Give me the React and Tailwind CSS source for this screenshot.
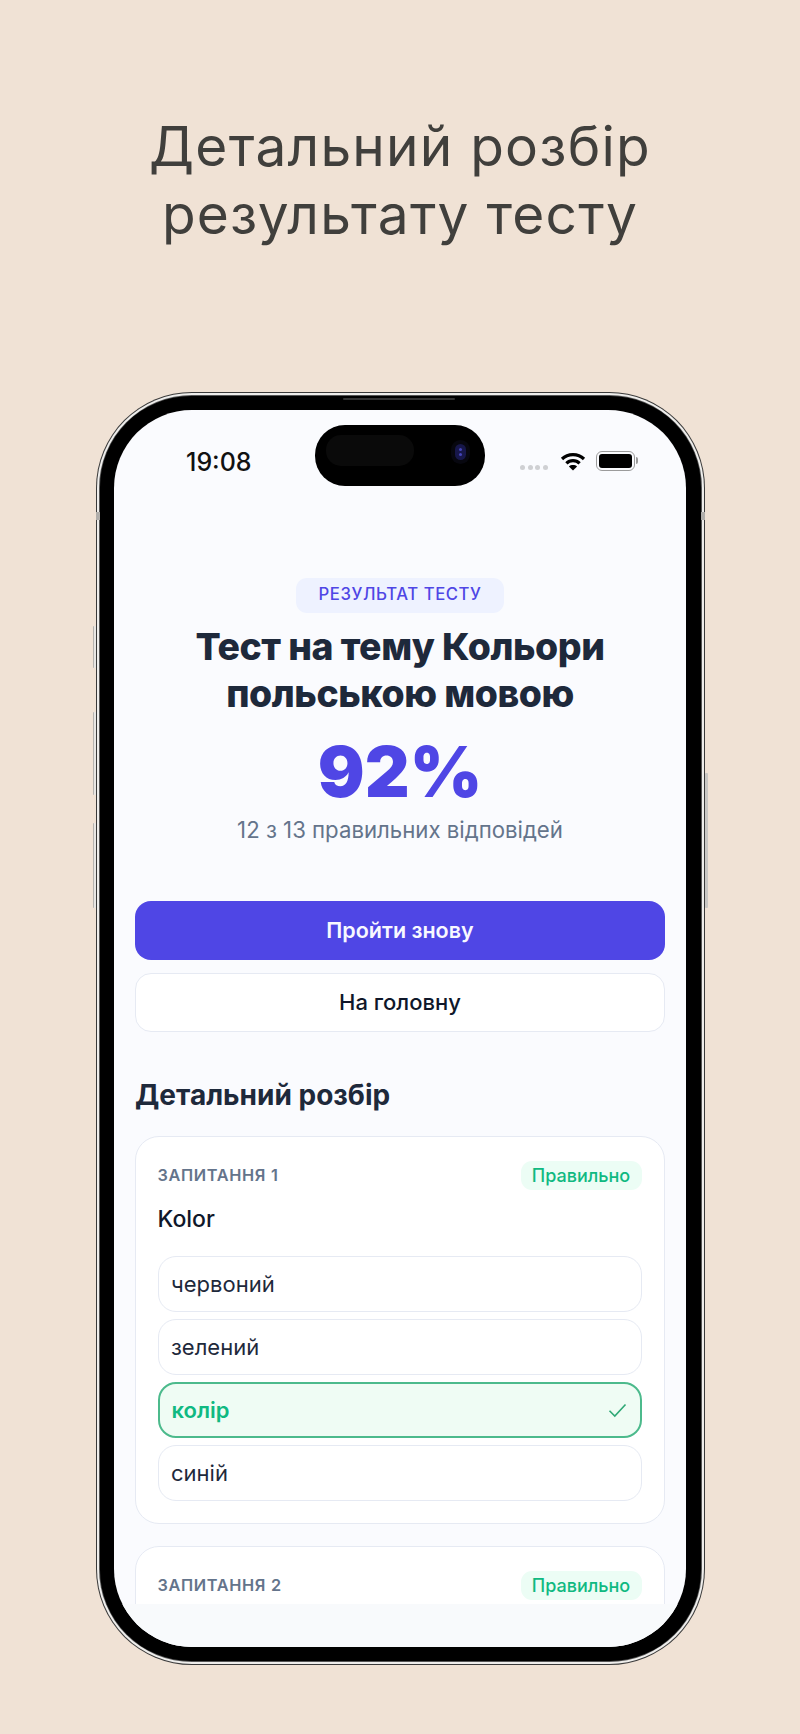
import React from "react";

function Wifi() {
  return (
    <svg width="26" height="19" viewBox="0 0 26 19" fill="none">
      <path d="M2 7 C8 1.2 18 1.2 24 7" stroke="#000" strokeWidth="3.2" />
      <path d="M6.4 11.4 C10 7.8 16 7.8 19.6 11.4" stroke="#000" strokeWidth="3.2" />
      <path d="M13 18.5 L8.9 14.4 C11 12.6 15 12.6 17.1 14.4 Z" fill="#000" />
    </svg>
  );
}

function Check() {
  return (
    <svg width="19" height="15" viewBox="0 0 19 15" fill="none">
      <path d="M1.5 7.8 L6.8 13 L17.5 1.5" stroke="#2fa876" strokeWidth="1.6" />
    </svg>
  );
}

function Option({ text, correct }) {
  return (
    <div
      className={
        correct
          ? "h-[56px] flex items-center justify-between pl-[12px] pr-[13px] rounded-[18px] border-2 border-[#4cba8c] bg-[#effcf4]"
          : "h-[56px] flex items-center justify-between pl-[12.5px] pr-[13px] rounded-[18px] border-[1.5px] border-[#e6eaf3] bg-white"
      }
    >
      <span className={correct ? "text-[22px] font-semibold text-[#10b981]" : "text-[22px] text-[#1e293b]"}>{text}</span>
      {correct && <Check />}
    </div>
  );
}

function QuestionHead({ n }) {
  return (
    <div className="flex items-center justify-between h-[29px]">
      <span className="text-[16.3px] font-semibold tracking-[0.04em] text-[#64748b]">ЗАПИТАННЯ {n}</span>
      <span className="h-[29px] w-[121px] flex items-center justify-center rounded-[11px] bg-[#ecfdf5] text-[18px] font-medium text-[#10b981]">
        Правильно
      </span>
    </div>
  );
}

function SideButton({ cls }) {
  return <div className={"absolute w-[3px] rounded-[1px] bg-[#e8e6e3] border-l border-[#b5b3b0] " + cls} />;
}

export default function App() {
  return (
    <div
      className="w-[800px] h-[1734px] overflow-hidden bg-[#f0e2d5] flex flex-col items-center"
      style={{ fontFamily: "Inter, 'Noto Sans', sans-serif" }}
    >
      <h1 className="mt-[113px] h-[135px] text-center text-[55px] leading-[67.5px] tracking-[0.022em] text-[#403f3c] font-normal">
        Детальний розбір
        <br />
        результату тесту
      </h1>

      <div className="relative mt-[144px] w-[609px] h-[1273px] rounded-[96px] bg-[#3a3a3a] p-[1px]">
        <SideButton cls="-left-[3px] top-[234px] h-[42px]" />
        <SideButton cls="-left-[3px] top-[320px] h-[83px]" />
        <SideButton cls="-left-[3px] top-[431px] h-[85px]" />
        <div className="absolute -right-[3px] top-[381px] h-[135px] w-[3px] rounded-[1px] bg-[#c9c7c4]" />
        <div className="absolute left-0 top-[120px] w-[4px] h-[8px] bg-[#b0aeab]" />
        <div className="absolute right-0 top-[120px] w-[4px] h-[8px] bg-[#b0aeab]" />

        <div className="w-full h-full rounded-[95px] bg-[#efeeec] p-[2px]">
          <div className="w-full h-full rounded-[93px] bg-[#555] p-[1px]">
            <div className="relative w-full h-full rounded-[91px] bg-black px-[14.5px] pt-[13.5px] pb-[14px]">
              <div className="absolute left-[243px] top-[2px] w-[112px] h-[2px] rounded-full bg-[#333]" />

              <div className="relative w-full h-full rounded-[78px] overflow-hidden bg-[#fafbfe] flex flex-col">
                <div className="absolute left-[201px] top-[15px] w-[170px] h-[61px] rounded-[30px] bg-black">
                  <div className="absolute left-[11px] top-[10px] w-[88px] h-[31px] rounded-[15px] bg-[#0a0a0a]" />
                  <div className="absolute left-[136px] top-[15px] w-[19px] h-[24px] rounded-full bg-[#07070f] flex items-center justify-center">
                    <div className="w-[11px] h-[16px] rounded-full bg-[#17174a] flex flex-col items-center justify-center gap-[2px]">
                      <i className="block w-[3px] h-[3px] rounded-full bg-[#4444b8]" />
                      <i className="block w-[3px] h-[3px] rounded-full bg-[#4444b8]" />
                    </div>
                  </div>
                </div>

                <div className="h-[1194px] overflow-hidden shrink-0 px-[21px]">
                  <div className="relative h-[168px] -mx-[21px]">
                    <span className="absolute left-[72px] top-[37px] text-[25px] leading-[30px] font-medium text-[#111]">19:08</span>
                    <div className="absolute left-[406px] top-[55px] flex gap-[2.5px]">
                      <i className="block w-[5px] h-[5px] rounded-full bg-[#cfd0d3]" />
                      <i className="block w-[5px] h-[5px] rounded-full bg-[#cfd0d3]" />
                      <i className="block w-[5px] h-[5px] rounded-full bg-[#cfd0d3]" />
                      <i className="block w-[5px] h-[5px] rounded-full bg-[#cfd0d3]" />
                    </div>
                    <div className="absolute left-[446px] top-[42px]"><Wifi /></div>
                    <div className="absolute left-[482px] top-[41px] w-[39px] h-[20px] rounded-[6px] border-[1.5px] border-[#9b9b9b] p-[2px]">
                      <div className="w-full h-full rounded-[3px] bg-black" />
                    </div>
                    <div className="absolute left-[522px] top-[47px] w-[2px] h-[7px] rounded-r-[2px] bg-[#9b9b9b]" />
                  </div>

                  <div className="flex flex-col items-center">
                    <div className="w-[208px] h-[35px] flex items-center justify-center rounded-[11px] bg-[#eef2ff] text-[16.7px] font-medium tracking-[0.035em] text-[#4f46e5]">
                      РЕЗУЛЬТАТ ТЕСТУ
                    </div>
                    <div className="mt-[10px] text-center text-[37.4px] leading-[47px] font-extrabold tracking-[-0.012em] text-[#1e293b]">
                      Тест на тему Кольори
                      <br />
                      польською мовою
                    </div>
                    <div className="mt-[13px] text-[69.5px] leading-[84px] font-black text-[#4f46e5]">92%</div>
                    <div className="mt-[1px] text-[22.2px] leading-[30px] text-[#64748b]">12 з 13 правильних відповідей</div>
                  </div>

                  <div className="mt-[56px] flex flex-col gap-[13px]">
                    <div className="h-[59px] flex items-center justify-center rounded-[16px] bg-[#4f46e5] text-[21.5px] font-semibold text-[#f8f8ff]">
                      Пройти знову
                    </div>
                    <div className="h-[59px] flex items-center justify-center rounded-[16px] border-[1.5px] border-[#e6eaf3] bg-white text-[22px] font-medium text-[#0f172a]">
                      На головну
                    </div>
                  </div>

                  <div className="mt-[45px] h-[36px] text-[28px] leading-[36px] font-bold text-[#1e293b]">Детальний розбір</div>

                  <div className="mt-[23.5px] flex flex-col gap-[22px]">
                    <div className="rounded-[24px] border-[1.5px] border-[#e6eaf3] bg-white pl-[21.5px] pr-[22.5px] pt-[24px] pb-[22px]">
                      <QuestionHead n={1} />
                      <div className="mt-[13px] h-[32px] text-[23px] leading-[32px] font-medium text-[#0f172a]">Kolor</div>
                      <div className="mt-[21px] flex flex-col gap-[7px]">
                        <Option text="червоний" />
                        <Option text="зелений" />
                        <Option text="колір" correct />
                        <Option text="синій" />
                      </div>
                    </div>
                    <div className="h-[386px] rounded-[24px] border-[1.5px] border-[#e6eaf3] bg-white pl-[21.5px] pr-[22.5px] pt-[24px] pb-[20px]">
                      <QuestionHead n={2} />
                    </div>
                  </div>
                </div>
                <div className="flex-1 bg-[#f8fafc]" />
              </div>
            </div>
          </div>
        </div>
      </div>
    </div>
  );
}
